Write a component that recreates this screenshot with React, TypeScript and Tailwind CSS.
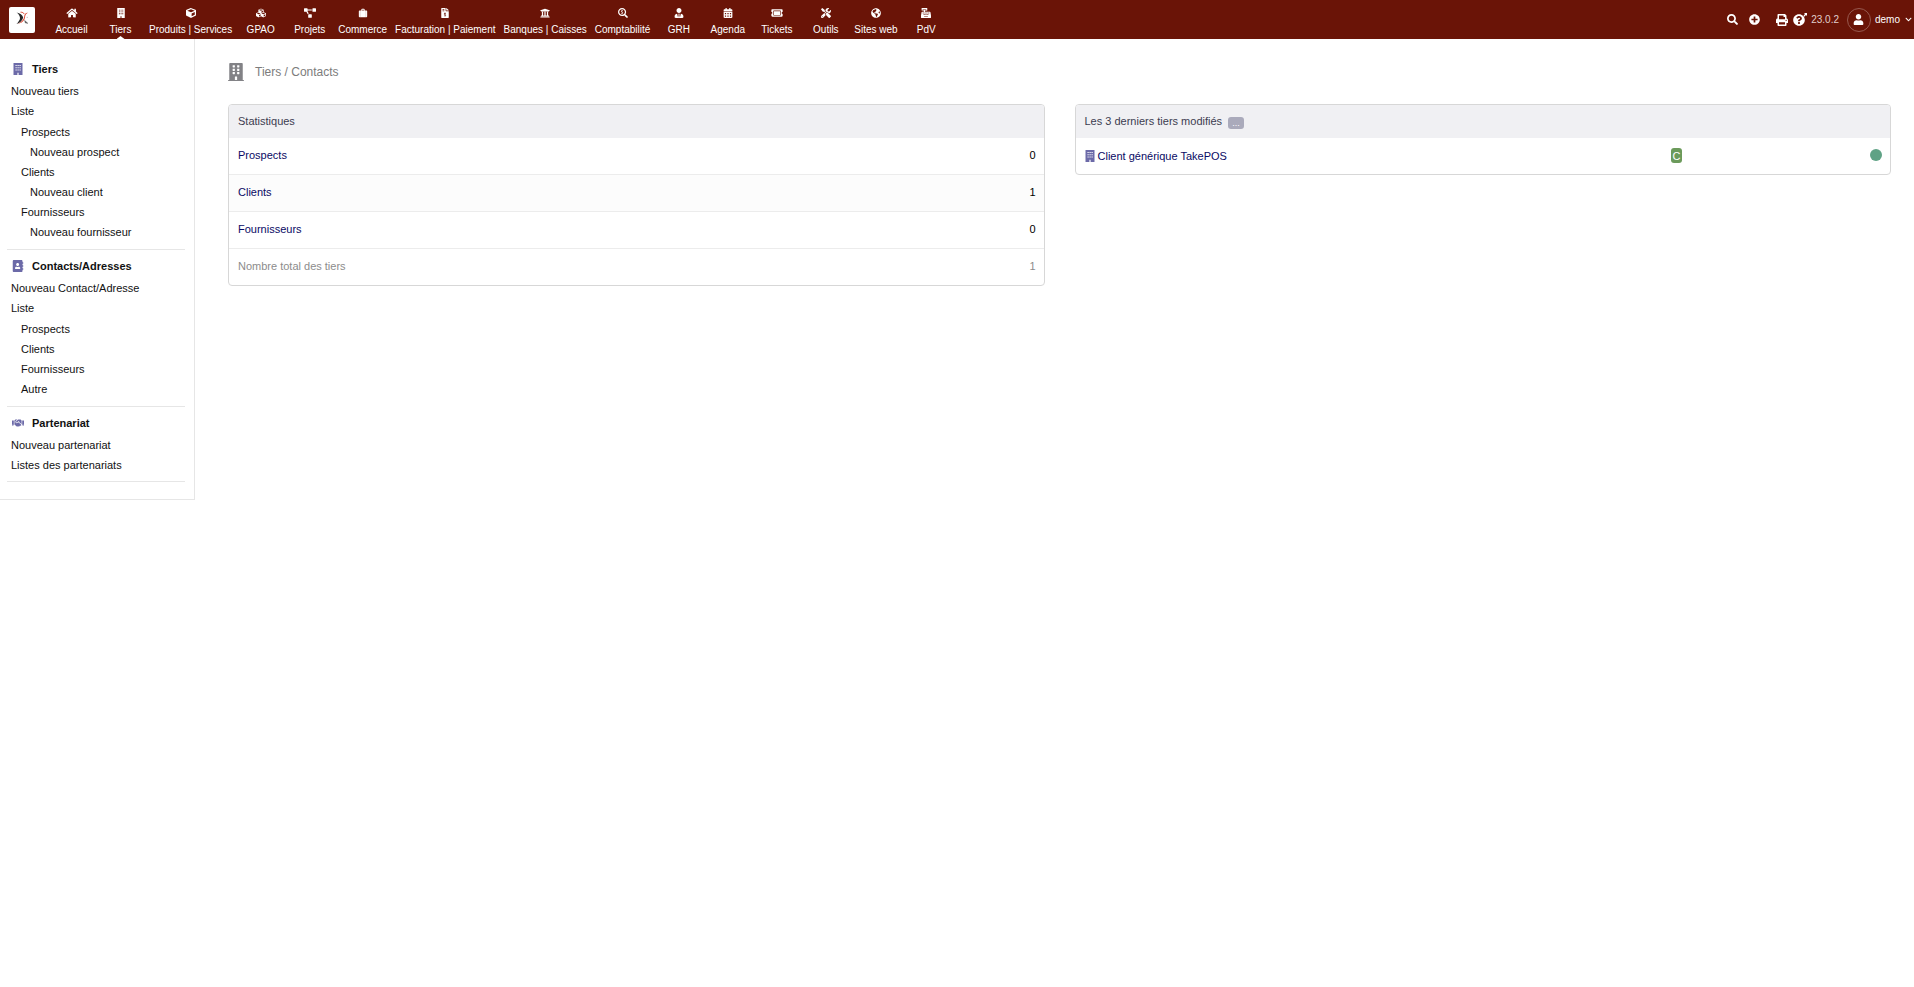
import type { ReactNode } from "react";
import type { IconType } from "react-icons";
import {
  FaAddressBook,
  FaCalendarAlt,
  FaCashRegister,
  FaChevronDown,
  FaCube,
  FaCubes,
  FaBuilding,
  FaFileInvoiceDollar,
  FaGlobeAmericas,
  FaHandshake,
  FaHome,
  FaPlusCircle,
  FaPrint,
  FaProjectDiagram,
  FaQuestionCircle,
  FaSearch,
  FaSearchDollar,
  FaTicketAlt,
  FaTools,
  FaUniversity,
  FaUser,
  FaUserTie,
} from "react-icons/fa";

type Glyph = IconType | ((props: { className?: string }) => ReactNode);
type TopEntry = { label: string; icon: Glyph; active?: boolean };
type SideEntry = { label: string; nested?: boolean };
type SideSection = { title: string; icon: Glyph; entries: string[]; children: SideEntry[] };

/* Small building glyph: at menu size the base plate is left out. */
function Building({ className }: { className?: string }) {
  return (
    <svg viewBox="0 0 12 12" className={className} fill="currentColor" aria-hidden="true">
      <path
        fillRule="evenodd"
        d="M1.500 0h9v12H6.600V9.800H5.400V12H1.500zM3.500 2v1h1.200V2zm2 0v1h1.200V2zm2 0v1h1.200V2zM3.500 4.200v1h1.200v-1zm2 0v1h1.200v-1zm2 0v1h1.200v-1zM3.500 6.400v1h1.200v-1zm2 0v1h1.200v-1zm2 0v1h1.200v-1z"
      />
    </svg>
  );
}

function Suitcase({ className }: { className?: string }) {
  return (
    <svg viewBox="0 0 12 12" className={className} fill="currentColor" aria-hidden="true">
      <path
        fillRule="evenodd"
        d="M4 3V1.9C4 1.3 4.4 1 4.9 1h2.2c.5 0 .9.3.9.9V3h1.8c.7 0 1.2.5 1.2 1.2v5.6c0 .7-.5 1.2-1.2 1.2H2.2C1.5 11 1 10.5 1 9.8V4.2C1 3.5 1.5 3 2.2 3zM5 3h2V2H5z"
      />
      <path d="M2.7 3v8M9.3 3v8" stroke="#6a1407" strokeOpacity="0.35" strokeWidth="0.5" />
    </svg>
  );
}

const topEntries: TopEntry[] = [
  { label: "Accueil", icon: FaHome },
  { label: "Tiers", icon: Building, active: true },
  { label: "Produits | Services", icon: FaCube },
  { label: "GPAO", icon: FaCubes },
  { label: "Projets", icon: FaProjectDiagram },
  { label: "Commerce", icon: Suitcase },
  { label: "Facturation | Paiement", icon: FaFileInvoiceDollar },
  { label: "Banques | Caisses", icon: FaUniversity },
  { label: "Comptabilité", icon: FaSearchDollar },
  { label: "GRH", icon: FaUserTie },
  { label: "Agenda", icon: FaCalendarAlt },
  { label: "Tickets", icon: FaTicketAlt },
  { label: "Outils", icon: FaTools },
  { label: "Sites web", icon: FaGlobeAmericas },
  { label: "PdV", icon: FaCashRegister },
];

const sideSections: SideSection[] = [
  {
    title: "Tiers",
    icon: Building,
    entries: ["Nouveau tiers", "Liste"],
    children: [
      { label: "Prospects" },
      { label: "Nouveau prospect", nested: true },
      { label: "Clients" },
      { label: "Nouveau client", nested: true },
      { label: "Fournisseurs" },
      { label: "Nouveau fournisseur", nested: true },
    ],
  },
  {
    title: "Contacts/Adresses",
    icon: FaAddressBook,
    entries: ["Nouveau Contact/Adresse", "Liste"],
    children: [{ label: "Prospects" }, { label: "Clients" }, { label: "Fournisseurs" }, { label: "Autre" }],
  },
  {
    title: "Partenariat",
    icon: FaHandshake,
    entries: ["Nouveau partenariat", "Listes des partenariats"],
    children: [],
  },
];

const stats = [
  { label: "Prospects", value: 0 },
  { label: "Clients", value: 1 },
  { label: "Fournisseurs", value: 0 },
];

function Logo() {
  return (
    <a href="#" aria-label="Société" className="ml-[9px] flex size-[26px] items-center justify-center rounded-[2px] bg-white">
      <svg viewBox="0 0 26 26" className="size-[26px]">
        <path d="M7.5 5.5C11 6 13.5 8 14.2 10.5C13.6 13.5 11 15.8 7.5 17C9.6 14.8 11 12.8 11 11C11 8.8 9.6 6.8 7.5 5.5Z" fill="#262626" />
        <path d="M19 5.8C16.8 5.6 15.4 7 15.3 9C15.2 12.5 12 15.8 8.5 16.8C12.5 16.6 16 13.500 16.100 9.800C16.200 7.800 17.200 6.500 19 5.800Z" fill="#d8442f" />
        <path d="M11.500 5.200C13.500 5.100 14.600 5.800 15.200 7" stroke="#d8442f" strokeWidth="0.9" fill="none" />
        <path d="M15.6 13.4L18.8 16.3L16.4 15.9Z" fill="#555" stroke="#555" strokeWidth="0.5" />
        <circle cx="18.2" cy="10.2" r="0.5" fill="#999" />
      </svg>
    </a>
  );
}

function TopBar() {
  return (
    <header className="flex h-[39px] items-center bg-[#6a1407] text-white">
      <Logo />
      <nav className="ml-3 flex h-full">
        {topEntries.map(({ label, icon: Icon, active }) => (
          <a key={label} href="#" className="relative flex min-w-[49px] flex-col items-center px-1 pt-2 text-[10px] whitespace-nowrap">
            <Icon className="h-[10px] w-3" />
            <span className="mt-[5px] leading-[14px]">{label}</span>
            {active && (
              <span className="absolute bottom-0 h-[3px] w-2 bg-white [clip-path:polygon(50%_0,100%_100%,0_100%)]" />
            )}
          </a>
        ))}
      </nav>
      <div className="ml-auto flex items-center pr-[2px] text-[10px]">
        <button type="button" aria-label="Rechercher" className="mr-[11px]">
          <FaSearch className="size-[11px]" />
        </button>
        <button type="button" aria-label="Ajout rapide" className="mr-4">
          <FaPlusCircle className="size-[11px]" />
        </button>
        <button type="button" aria-label="Imprimer" className="mr-[5px]">
          <FaPrint className="size-3" />
        </button>
        <a href="#" aria-label="Aide" className="relative mr-[6px]">
          <FaQuestionCircle className="size-3" />
          <svg viewBox="0 0 4 4" className="absolute -top-px -right-[2px] size-1">
            <path d="M1 0h3v3L3 2 1.2 3.8.3 2.9 2 1z" fill="currentColor" />
          </svg>
        </a>
        <span className="mr-2 text-[#e0cfcc]">23.0.2</span>
        <button type="button" className="flex items-center">
          <span className="flex size-6 items-center justify-center rounded-full border border-[#97594f]">
            <FaUser className="size-[11px]" />
          </span>
          <span className="mr-[5px] ml-1">demo</span>
          <FaChevronDown className="size-[7px]" />
        </button>
      </div>
    </header>
  );
}

function SideMenu() {
  return (
    <aside className="w-[195px] shrink-0 border-r border-b border-[#e6e6e6] pt-[14px] pr-[9px] pb-[17px] pl-[7px]">
      {sideSections.map(({ title, icon: Icon, entries, children }) => (
        <section key={title} className="border-b border-[#e6e6e6] pt-1 pb-[6px] pl-1 leading-5 text-[#111]">
          <h2 className="flex h-6 items-center font-bold">
            <Icon className="mr-2 ml-px size-3 text-[#6c6aa8]" />
            {title}
          </h2>
          <ul>
            {entries.map((label) => (
              <li key={label}>
                <a href="#">{label}</a>
              </li>
            ))}
          </ul>
          {children.length > 0 && (
            <ul className="py-px pl-[10px]">
              {children.map(({ label, nested }) => (
                <li key={label} className={nested ? "pl-[9px]" : ""}>
                  <a href="#">{label}</a>
                </li>
              ))}
            </ul>
          )}
        </section>
      ))}
    </aside>
  );
}

function Card({ children }: { children: ReactNode }) {
  return <div className="overflow-hidden rounded-[4px] border border-[#d7d7d7]">{children}</div>;
}

function StatsCard() {
  return (
    <Card>
      <table className="w-full border-separate border-spacing-0">
        <thead>
          <tr className="bg-[#f0f0f3] text-[#3c3c50]">
            <th colSpan={2} className="h-[33px] px-[9px] pb-[2px] text-left font-normal">Statistiques</th>
          </tr>
        </thead>
        <tbody>
          {stats.map(({ label, value }) => (
            <tr key={label} className="even:bg-[#fcfcfc]">
              <td className="h-[37px] border-b border-[#ececec] px-[9px] pb-[2px]">
                <a href="#" className="text-[#0a0a64]">{label}</a>
              </td>
              <td className="border-b border-[#ececec] px-2 pb-[2px] text-right text-black">{value}</td>
            </tr>
          ))}
          <tr className="text-[#8c8c8c]">
            <td className="h-9 px-[9px] pb-[2px]">Nombre total des tiers</td>
            <td className="px-2 pb-[2px] text-right">1</td>
          </tr>
        </tbody>
      </table>
    </Card>
  );
}

function RecentCard() {
  return (
    <Card>
      <table className="w-full border-separate border-spacing-0">
        <thead>
          <tr className="bg-[#f0f0f3] text-[#3c3c50]">
            <th colSpan={3} className="h-[33px] px-[9px] pb-[2px] text-left font-normal">
              <span className="flex items-end">
                Les 3 derniers tiers modifiés
                <a href="#" className="ml-[6px] flex h-3 w-4 items-center justify-center rounded-[3px] bg-[#aaaabb] text-[9px] text-white">...</a>
              </span>
            </th>
          </tr>
        </thead>
        <tbody>
          <tr>
            <td className="h-9 px-2">
              <a href="#" className="flex items-center text-[#0a0a64]">
                <Building className="mr-[2px] size-3 text-[#6c6aa8]" />
                Client générique TakePOS
              </a>
            </td>
            <td className="w-[119px] pb-px">
              <span title="Client" className="flex h-[15px] w-[11px] items-center justify-center rounded-[3px] bg-[#6b9a5b] text-[11px] text-white">C</span>
            </td>
            <td className="w-[100px] px-2 pb-[2px]">
              <span title="Ouvert" className="ml-auto block size-3 rounded-full bg-[#5fa285]" />
            </td>
          </tr>
        </tbody>
      </table>
    </Card>
  );
}

export default function App() {
  return (
    <div className="min-h-screen bg-white font-['Liberation_Sans',Arial,sans-serif] text-[11px] leading-4">
      <TopBar />
      <div className="flex items-start">
        <SideMenu />
        <main className="min-w-0 flex-1 pt-[23px] pr-[23px] pl-[33px]">
          <h1 className="flex h-5 items-center text-[12px] text-[#7c7c7c]">
            <FaBuilding className="mr-[11px] h-[18px] w-4 text-[#828286]" />
            Tiers / Contacts
          </h1>
          <div className="mt-[22px] grid grid-cols-2 items-start gap-[30px]">
            <StatsCard />
            <RecentCard />
          </div>
        </main>
      </div>
    </div>
  );
}
